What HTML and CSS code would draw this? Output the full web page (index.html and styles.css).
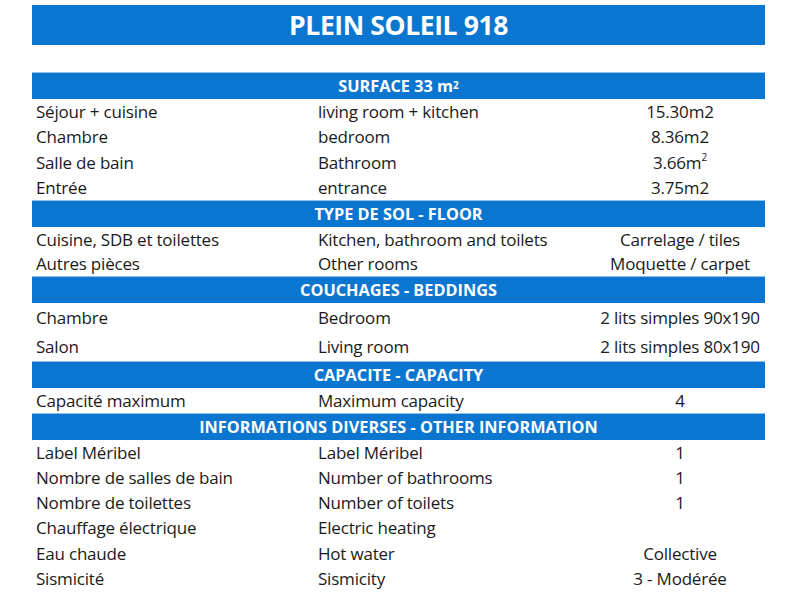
FILE: index.html
```html
<!DOCTYPE html>
<html lang="fr">
<head>
<meta charset="utf-8">
<title>Plein Soleil 918</title>
<link rel="stylesheet" href="styles.css">
</head>
<body>
<div class="page">
  <div class="title">PLEIN SOLEIL 918</div>
  <div class="sheet">
    <div class="head">SURFACE 33 m<sup>2</sup></div>
    <div class="row"><span>Séjour + cuisine</span><span>living room + kitchen</span><span class="val">15.30m2</span></div>
    <div class="row"><span>Chambre</span><span>bedroom</span><span class="val">8.36m2</span></div>
    <div class="row"><span>Salle de bain</span><span>Bathroom</span><span class="val">3.66m<sup>2</sup></span></div>
    <div class="row"><span>Entrée</span><span>entrance</span><span class="val">3.75m2</span></div>

    <div class="head">TYPE DE SOL - FLOOR</div>
    <div class="row r24"><span>Cuisine, SDB et toilettes</span><span>Kitchen, bathroom and toilets</span><span class="val">Carrelage / tiles</span></div>
    <div class="row r24"><span>Autres pièces</span><span>Other rooms</span><span class="val">Moquette / carpet</span></div>

    <div class="head">COUCHAGES - BEDDINGS</div>
    <div class="row r29"><span>Chambre</span><span>Bedroom</span><span class="val">2 lits simples 90x190</span></div>
    <div class="row r29"><span>Salon</span><span>Living room</span><span class="val">2 lits simples 80x190</span></div>

    <div class="head">CAPACITE - CAPACITY</div>
    <div class="row r24"><span>Capacité maximum</span><span>Maximum capacity</span><span class="val">4</span></div>

    <div class="head">INFORMATIONS DIVERSES - OTHER INFORMATION</div>
    <div class="row"><span>Label Méribel</span><span>Label Méribel</span><span class="val">1</span></div>
    <div class="row"><span>Nombre de salles de bain</span><span>Number of bathrooms</span><span class="val">1</span></div>
    <div class="row"><span>Nombre de toilettes</span><span>Number of toilets</span><span class="val">1</span></div>
    <div class="row"><span>Chauffage électrique</span><span>Electric heating</span><span class="val"></span></div>
    <div class="row"><span>Eau chaude</span><span>Hot water</span><span class="val">Collective</span></div>
    <div class="row"><span>Sismicité</span><span>Sismicity</span><span class="val">3 - Modérée</span></div>
  </div>
</div>
</body>
</html>
```
FILE: styles.css
```css
html, body {
  margin: 0;
  padding: 0;
  background: #ffffff;
}
body {
  font-family: "Open Sans", "Noto Sans", sans-serif;
  color: #1a1a1a;
}
.page {
  width: 733px;
  margin-left: 32px;
  padding-top: 5px;
}
.title {
  height: 40px;
  background: #0b76cf;
  color: #ffffff;
  font-weight: 700;
  font-size: 26.5px;
  letter-spacing: -0.4px;
  display: flex;
  align-items: center;
  justify-content: center;
}
.sheet {
  margin-top: 27px;
}
.head {
  height: 26px;
  background: #0b76cf;
  border-top: 1px solid #8fbfea;
  color: #ffffff;
  font-weight: 700;
  font-size: 16.3px;
  letter-spacing: 0;
  display: flex;
  align-items: center;
  justify-content: center;
}
.head sup, .val sup {
  font-size: 10px;
  line-height: 0;
  position: relative;
  top: -1px;
}
.row {
  display: grid;
  grid-template-columns: 282px 281px 170px;
  height: 25.25px;
  align-items: center;
  font-size: 17px;
  letter-spacing: -0.2px;
}
.row span {
  padding-left: 4px;
  white-space: nowrap;
}
.row .val {
  padding-left: 0;
  text-align: center;
}
.r24 { height: 24.5px; }
.r29 { height: 29px; }
```
